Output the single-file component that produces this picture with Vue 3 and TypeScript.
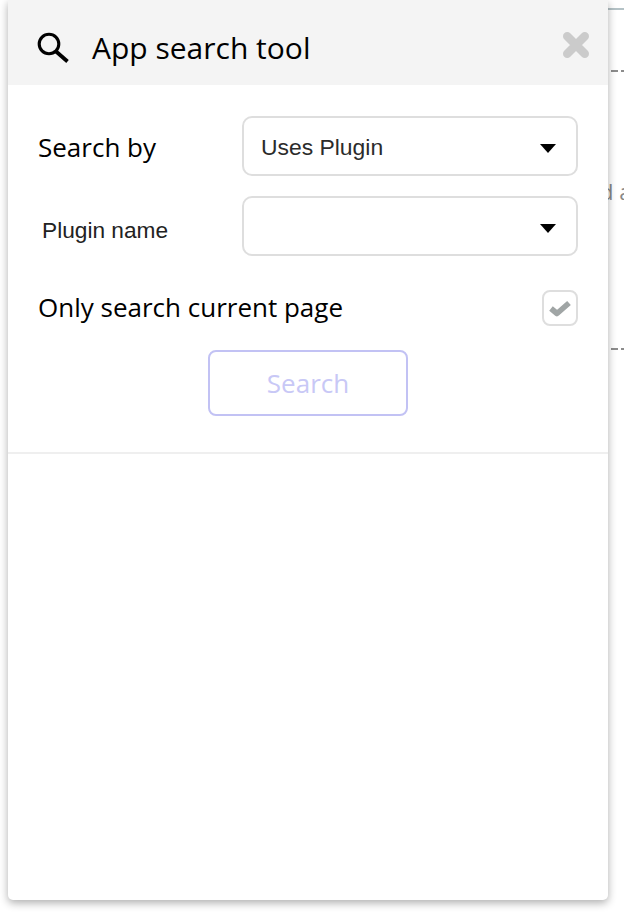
<script setup lang="ts">
import { ref } from 'vue'

const searchBy = ref('Uses Plugin')
const pluginName = ref('')
const currentPageOnly = ref(true)
</script>

<template>
  <div class="page">
    <div class="backdrop">
      <div class="top-line"></div>
      <div class="dash dash-one"></div>
      <span class="behind-text">d a</span>
      <div class="dash dash-two"></div>
    </div>

    <aside class="panel">
      <header class="panel-header">
        <svg class="search-icon" width="34" height="34" viewBox="0 0 34 34">
          <circle cx="12" cy="14" r="9.8" fill="none" stroke="#000" stroke-width="3.1" />
          <path d="M18.5 21 L30.5 31.5" fill="none" stroke="#000" stroke-width="3.8" />
        </svg>
        <h1 class="title">App search tool</h1>
        <svg class="close-icon" width="28" height="28" viewBox="0 0 28 28">
          <path d="M5.25 5.25 L22.75 22.75 M22.75 5.25 L5.25 22.75" fill="none" stroke="#cbcbcb" stroke-width="8.5" stroke-linecap="round" />
        </svg>
      </header>

      <div class="form">
        <div class="row row-first">
          <label class="label">Search by</label>
          <div class="select">
            <span class="select-value">{{ searchBy }}</span>
            <span class="caret"></span>
          </div>
        </div>
        <div class="row row-second">
          <label class="label label-small">Plugin name</label>
          <div class="select">
            <span class="select-value">{{ pluginName }}</span>
            <span class="caret"></span>
          </div>
        </div>
        <div class="row row-check">
          <label class="label">Only search current page</label>
          <div class="checkbox">
            <svg v-if="currentPageOnly" width="26" height="20" viewBox="0 0 26 20">
              <path d="M4 10.5 L10 15.5 L22 5" fill="none" stroke="#a0a5a5" stroke-width="5.6" stroke-linejoin="round" />
            </svg>
          </div>
        </div>
        <div class="actions">
          <button class="search-btn" disabled>Search</button>
        </div>
      </div>

      <div class="results"></div>
    </aside>
  </div>
</template>

<style>
html,
body {
  margin: 0;
  background: #fff;
}
</style>

<style scoped>
.page {
  position: relative;
  width: 624px;
  height: 914px;
  overflow: hidden;
  background: #fff;
}

.top-line {
  position: absolute;
  left: 600px;
  top: 8px;
  width: 24px;
  height: 2px;
  background: #b4c2c6;
}

.dash {
  position: absolute;
  left: 611px;
  width: 13px;
  height: 2px;
  background: repeating-linear-gradient(90deg, #8c8c8c 0 7px, transparent 7px 10px);
}

.dash-one {
  top: 70px;
}

.dash-two {
  top: 348px;
}

.behind-text {
  position: absolute;
  left: 600px;
  top: 177px;
  font-family: "Open Sans", sans-serif;
  font-size: 22px;
  line-height: 28px;
  color: #888;
  white-space: nowrap;
}

.panel {
  position: absolute;
  left: 8px;
  top: 0;
  width: 600px;
  height: 900px;
  display: flex;
  flex-direction: column;
  background: #fff;
  border-radius: 0 0 5px 5px;
  box-shadow: 0 3px 9px rgba(0, 0, 0, 0.32);
}

.panel-header {
  position: relative;
  height: 85px;
  flex: none;
  display: flex;
  align-items: center;
  padding: 10px 0 0 29px;
  background: #f4f4f4;
  box-sizing: border-box;
}

.search-icon {
  flex: none;
  margin-right: 21px;
  margin-top: -1px;
}

.title {
  margin: 0;
  font-family: "Open Sans", sans-serif;
  font-size: 30px;
  font-weight: 400;
  line-height: 40px;
  color: #000;
}

.close-icon {
  position: absolute;
  right: 18px;
  top: 31px;
}

.form {
  padding: 31px 30px 0;
  height: 369px;
  box-sizing: border-box;
  border-bottom: 2px solid #efefef;
  flex: none;
}

.row {
  display: flex;
  align-items: center;
  justify-content: space-between;
}

.row-second {
  margin-top: 20px;
}

.row-check {
  margin-top: 34px;
}

.label {
  font-family: "Open Sans", sans-serif;
  font-size: 26px;
  line-height: 36px;
  color: #000;
}

.row-first .label {
  margin-top: 2px;
}

.row-check .label {
  position: relative;
  top: -1px;
}

.label-small {
  font-family: "Liberation Sans", Arial, sans-serif;
  font-size: 22.7px;
  color: #222;
  padding-left: 4px;
  position: relative;
  top: 4px;
}

.select {
  width: 336px;
  height: 60px;
  display: flex;
  align-items: center;
  justify-content: space-between;
  padding: 0 20px 0 17px;
  box-sizing: border-box;
  border: 2px solid #dedede;
  border-radius: 10px;
  background: #fff;
}

.select-value {
  margin-top: 2px;
  font-family: "Liberation Sans", Arial, sans-serif;
  font-size: 22.9px;
  color: #2b2b2b;
}

.caret {
  width: 0;
  height: 0;
  margin-top: 5px;
  border-left: 8px solid transparent;
  border-right: 8px solid transparent;
  border-top: 9px solid #000;
}

.checkbox {
  width: 36px;
  height: 36px;
  display: flex;
  align-items: center;
  justify-content: center;
  box-sizing: border-box;
  border: 2px solid #dedede;
  border-radius: 8px;
}

.actions {
  display: flex;
  justify-content: center;
  margin-top: 24px;
}

.search-btn {
  width: 200px;
  height: 66px;
  font-family: "Open Sans", sans-serif;
  font-size: 26px;
  color: #c8c8f6;
  background: #fff;
  border: 2px solid #c2c2f4;
  border-radius: 8px;
  padding: 0;
}

.results {
  flex: 1;
}
</style>
